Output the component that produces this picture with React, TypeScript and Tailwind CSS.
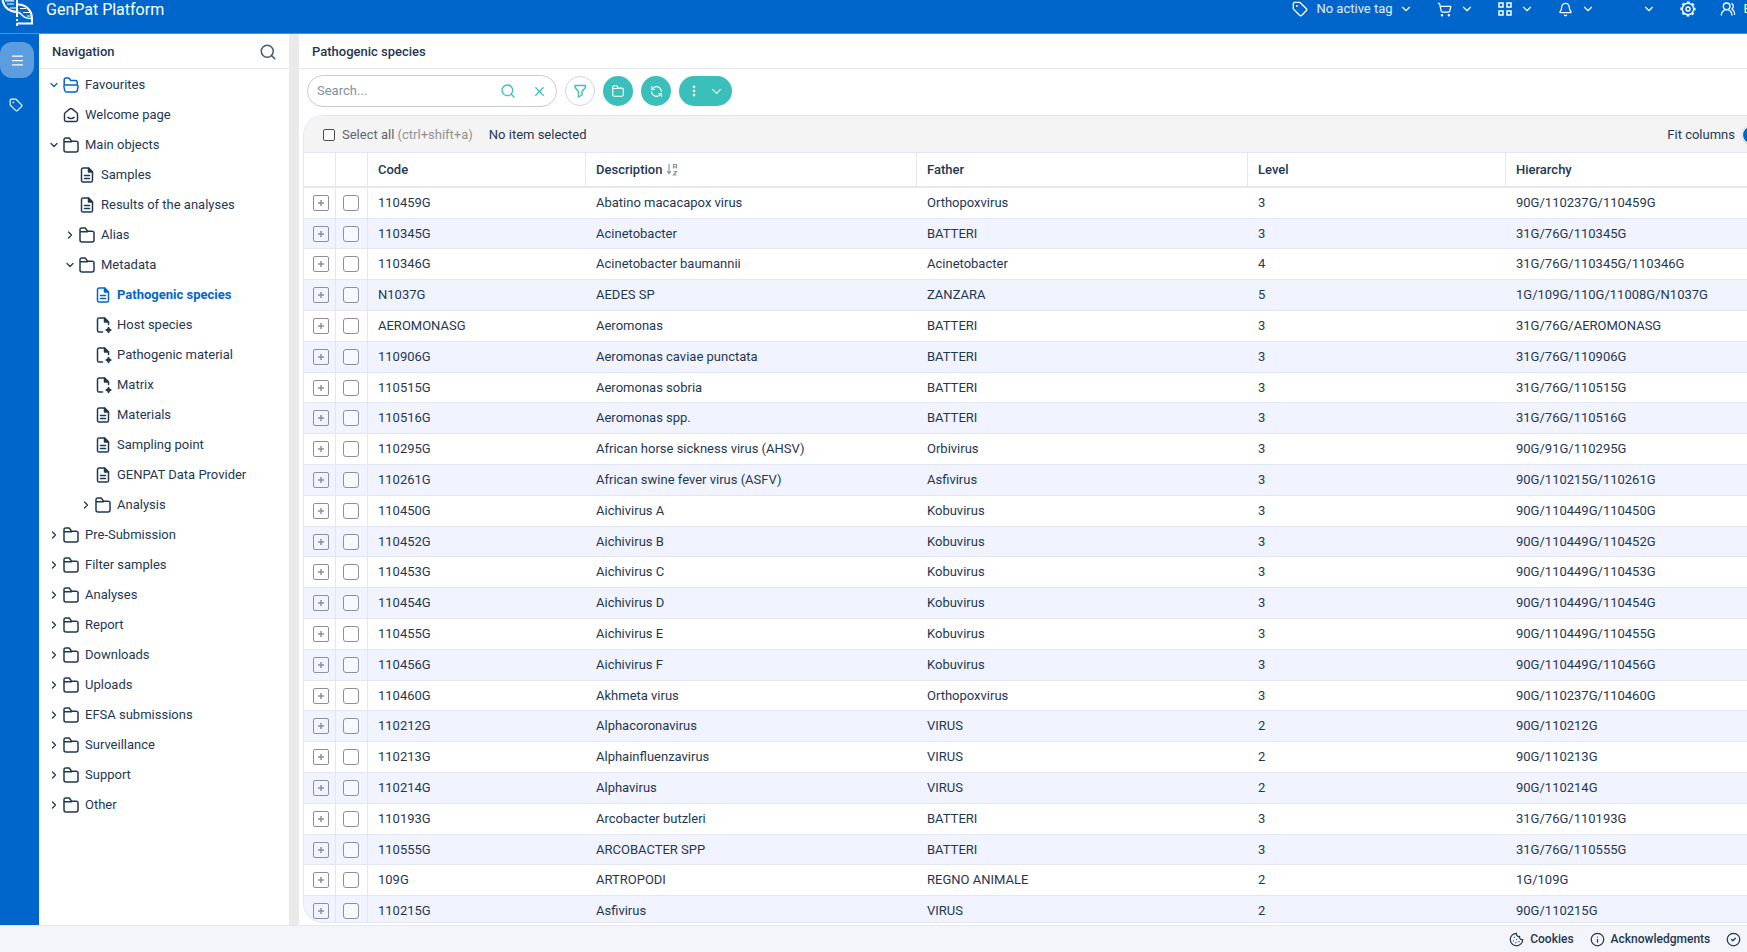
import type { ReactNode } from "react";
import { Bell, ChevronDown, ChevronRight, CircleCheck, Cookie, EllipsisVertical, Info, Menu, RefreshCw, Search, ShoppingCart, Tag, UsersRound, X } from "lucide-react";

type IconName = "folder" | "open" | "file" | "special" | "home";

interface NavItem {
  label: string;
  icon: IconName;
  level: number;
  arrow?: "down" | "right";
  active?: boolean;
}

const navItems: NavItem[] = [
  { label: "Favourites", icon: "open", level: 0, arrow: "down" },
  { label: "Welcome page", icon: "home", level: 0 },
  { label: "Main objects", icon: "folder", level: 0, arrow: "down" },
  { label: "Samples", icon: "file", level: 1 },
  { label: "Results of the analyses", icon: "file", level: 1 },
  { label: "Alias", icon: "folder", level: 1, arrow: "right" },
  { label: "Metadata", icon: "folder", level: 1, arrow: "down" },
  { label: "Pathogenic species", icon: "file", level: 2, active: true },
  { label: "Host species", icon: "special", level: 2 },
  { label: "Pathogenic material", icon: "special", level: 2 },
  { label: "Matrix", icon: "special", level: 2 },
  { label: "Materials", icon: "file", level: 2 },
  { label: "Sampling point", icon: "file", level: 2 },
  { label: "GENPAT Data Provider", icon: "file", level: 2 },
  { label: "Analysis", icon: "folder", level: 2, arrow: "right" },
  { label: "Pre-Submission", icon: "folder", level: 0, arrow: "right" },
  { label: "Filter samples", icon: "folder", level: 0, arrow: "right" },
  { label: "Analyses", icon: "folder", level: 0, arrow: "right" },
  { label: "Report", icon: "folder", level: 0, arrow: "right" },
  { label: "Downloads", icon: "folder", level: 0, arrow: "right" },
  { label: "Uploads", icon: "folder", level: 0, arrow: "right" },
  { label: "EFSA submissions", icon: "folder", level: 0, arrow: "right" },
  { label: "Surveillance", icon: "folder", level: 0, arrow: "right" },
  { label: "Support", icon: "folder", level: 0, arrow: "right" },
  { label: "Other", icon: "folder", level: 0, arrow: "right" },
];

const indent = ["pl-[9px]", "pl-[25px]", "pl-[41px]"];

const rows = [
  ["110459G", "Abatino macacapox virus", "Orthopoxvirus", "3", "90G/110237G/110459G"],
  ["110345G", "Acinetobacter", "BATTERI", "3", "31G/76G/110345G"],
  ["110346G", "Acinetobacter baumannii", "Acinetobacter", "4", "31G/76G/110345G/110346G"],
  ["N1037G", "AEDES SP", "ZANZARA", "5", "1G/109G/110G/11008G/N1037G"],
  ["AEROMONASG", "Aeromonas", "BATTERI", "3", "31G/76G/AEROMONASG"],
  ["110906G", "Aeromonas caviae punctata", "BATTERI", "3", "31G/76G/110906G"],
  ["110515G", "Aeromonas sobria", "BATTERI", "3", "31G/76G/110515G"],
  ["110516G", "Aeromonas spp.", "BATTERI", "3", "31G/76G/110516G"],
  ["110295G", "African horse sickness virus (AHSV)", "Orbivirus", "3", "90G/91G/110295G"],
  ["110261G", "African swine fever virus (ASFV)", "Asfivirus", "3", "90G/110215G/110261G"],
  ["110450G", "Aichivirus A", "Kobuvirus", "3", "90G/110449G/110450G"],
  ["110452G", "Aichivirus B", "Kobuvirus", "3", "90G/110449G/110452G"],
  ["110453G", "Aichivirus C", "Kobuvirus", "3", "90G/110449G/110453G"],
  ["110454G", "Aichivirus D", "Kobuvirus", "3", "90G/110449G/110454G"],
  ["110455G", "Aichivirus E", "Kobuvirus", "3", "90G/110449G/110455G"],
  ["110456G", "Aichivirus F", "Kobuvirus", "3", "90G/110449G/110456G"],
  ["110460G", "Akhmeta virus", "Orthopoxvirus", "3", "90G/110237G/110460G"],
  ["110212G", "Alphacoronavirus", "VIRUS", "2", "90G/110212G"],
  ["110213G", "Alphainfluenzavirus", "VIRUS", "2", "90G/110213G"],
  ["110214G", "Alphavirus", "VIRUS", "2", "90G/110214G"],
  ["110193G", "Arcobacter butzleri", "BATTERI", "3", "31G/76G/110193G"],
  ["110555G", "ARCOBACTER SPP", "BATTERI", "3", "31G/76G/110555G"],
  ["109G", "ARTROPODI", "REGNO ANIMALE", "2", "1G/109G"],
  ["110215G", "Asfivirus", "VIRUS", "2", "90G/110215G"],
];

function Glyph({ name, className = "size-4" }: { name: IconName; className?: string }) {
  const paths: Record<IconName, ReactNode> = {
    folder: (
      <path d="M1 4.7h7.6M1 13V2.6A1.6 1.6 0 0 1 2.6 1h3.6l2.4 3.2h4.6A1.8 1.8 0 0 1 15 6v7a2 2 0 0 1-2 2H3a2 2 0 0 1-2-2Z" />
    ),
    open: (
      <path d="M1.2 8V2.6A1.6 1.6 0 0 1 2.8 1h3l2 2.4h4.8a1.6 1.6 0 0 1 1.6 1.6v3M2 8h12a1.1 1.1 0 0 1 1.1 1.3l-.8 4.2a1.8 1.8 0 0 1-1.8 1.5h-9a1.8 1.8 0 0 1-1.8-1.5L.9 9.3A1.1 1.1 0 0 1 2 8Z" />
    ),
    file: (
      <>
        <path d="M2.5 2.6A1.6 1.6 0 0 1 4.1 1h5.4l4 4v8.4a1.6 1.6 0 0 1-1.6 1.6H4.1a1.6 1.6 0 0 1-1.6-1.6ZM5.5 8.500h5M5.500 11.500h5" />
        <path d="M9.5 1v4h4Z" fill="currentColor" />
      </>
    ),
    special: (
      <>
        <path d="M7.5 15H4.1a1.6 1.6 0 0 1-1.6-1.6V2.6A1.6 1.6 0 0 1 4.1 1h5.4l4 4v2.500" />
        <path d="M9.5 1v4h4Z" fill="currentColor" />
        <path d="m13.500 10.800.7 1.500 1.500.7-1.500.7-.7 1.500-.7-1.500-1.500-.7 1.500-.7Z" strokeWidth="1.800" />
      </>
    ),
    home: <path d="M1.5 7.2c0-.7.3-1.300.9-1.700l4.500-3.600a1.800 1.800 0 0 1 2.200 0l4.500 3.600c.6.400.9 1 .9 1.700v5.600a1.800 1.800 0 0 1-1.800 1.800H3.300a1.800 1.800 0 0 1-1.800-1.800ZM5 10.400c1.600 1.400 4.400 1.400 6 0" />,
  };
  return (
    <svg viewBox="0 0 16 16" className={`shrink-0 overflow-visible ${className}`} fill="none" stroke="currentColor" strokeWidth="1.5" strokeLinecap="round" strokeLinejoin="round" aria-hidden="true">
      {paths[name]}
    </svg>
  );
}

function Logo() {
  return (
    <svg viewBox="0 0 34 27" className="h-[27px] w-[34px]" fill="none" stroke="white" strokeWidth="2" aria-hidden="true">
      <path d="M2.500 0C4 7 9 11.500 17 12M17 0v17M17 19v2M17 23v3" />
      <path d="M18 4.500c8 0 14 6 14 14v5H17" />
      <path d="M17 12c3 0 4 2 6 4s5 2.500 9 2.500" strokeWidth="1.500" />
      <path d="M5 .8h9M7 4h7M10 8h6M20 8.500h6M23 12.500h7M27 16h4" strokeWidth="1.200" />
    </svg>
  );
}

function HeaderMenu({ label, children, className = "" }: { label: string; children?: ReactNode; className?: string }) {
  return (
    <button aria-label={label} className={`flex h-5 shrink-0 items-center ${className}`}>
      {children}
      <ChevronDown size={14} strokeWidth={2} />
    </button>
  );
}

function Header() {
  return (
    <header className="flex h-[34px] shrink-0 items-start overflow-hidden border-b border-[#4a93dc] bg-[#0066cc] text-white">
      <Logo />
      <span className="ml-3 shrink-0 text-base leading-5">GenPat Platform</span>
      <div className="ml-auto -mr-1 flex shrink-0 items-center text-[13px] leading-5 [&>button]:-mt-px">
        <HeaderMenu label="Active tag" className="mr-6">
          <Tag size={16} strokeWidth={2} className="mr-2" />
          <span className="mr-1.5 text-[#e0ecf9]">No active tag</span>
        </HeaderMenu>
        <HeaderMenu label="Cart" className="mr-6">
          <ShoppingCart size={15} strokeWidth={2} className="mr-2" />
        </HeaderMenu>
        <HeaderMenu label="Applications" className="mr-6">
          <svg viewBox="0 0 14 14" className="mr-2 size-[14px]" fill="none" stroke="currentColor" strokeWidth="1.5" aria-hidden="true">
            <path d="M1 1h4v4H1ZM9 1h4v4H9ZM1 9h4v4H1ZM9 9h4v4H9Z" />
          </svg>
        </HeaderMenu>
        <HeaderMenu label="Notifications" className="mr-[47px]">
          <Bell size={15} strokeWidth={2} className="mr-2" />
        </HeaderMenu>
        <HeaderMenu label="Language" className="mr-6" />
        <button aria-label="Settings" className="mr-6">
          <svg viewBox="0 0 16 16" className="size-4" fill="none" stroke="currentColor" aria-hidden="true">
            <circle cx="8" cy="8" r="6.900" strokeWidth="1.400" strokeDasharray="2.800 2.620" strokeDashoffset="1.400" />
            <circle cx="8" cy="8" r="5.700" strokeWidth="1.400" />
            <circle cx="8" cy="8" r="2" strokeWidth="1.400" />
          </svg>
        </button>
        <button className="flex items-center gap-2">
          <UsersRound size={16} strokeWidth={2} />
          <span>E</span>
        </button>
      </div>
    </header>
  );
}

function Sidebar() {
  return (
    <nav className="flex w-[250px] shrink-0 flex-col">
      <div className="flex h-[35px] shrink-0 items-center justify-between border-b border-[#e4e6f0] pt-0.5 pr-3 pl-[13px]">
        <h2 className="text-[13px] font-medium">Navigation</h2>
        <button aria-label="Search navigation">
          <Search size={18} strokeWidth={2} className="text-[#455b71]" />
        </button>
      </div>
      <ul className="pt-px">
        {navItems.map((item) => (
          <li key={item.label}>
            <a href="#" className={`flex h-[30px] items-center text-[13px] ${indent[item.level]} ${item.active ? "font-bold text-[#0066cc]" : ""}`}>
              <span className={`flex w-[15px] shrink-0 ${item.icon === "open" ? "text-[#0066cc]" : ""}`}>
                {item.arrow === "down" && <ChevronDown size={12} strokeWidth={2.5} />}
                {item.arrow === "right" && <ChevronRight size={12} strokeWidth={2.5} />}
              </span>
              <Glyph name={item.icon} className={item.icon === "open" ? "mr-[6px] size-4 text-[#0066cc]" : "mr-[6px] size-4"} />
              {item.label}
            </a>
          </li>
        ))}
      </ul>
    </nav>
  );
}

function Toolbar() {
  return (
    <div className="flex h-[46px] shrink-0 items-center gap-2 px-2 pb-0.5">
      <div className="flex h-8 w-[250px] items-center rounded-full border border-[#c8cad8] px-[9px] text-[#3bbfba]">
        <input aria-label="Search" placeholder="Search..." className="min-w-0 flex-1 text-[13px] text-[#1f3851] outline-none placeholder:text-[#85919e]" />
        <button aria-label="Run search" className="mr-4">
          <Search size={16} strokeWidth={2} />
        </button>
        <button aria-label="Clear search">
          <X size={15} strokeWidth={2} />
        </button>
      </div>
      <button aria-label="Filter" className="flex size-[30px] items-center justify-center rounded-full border border-[#d3d5e2] text-[#3bbfba]">
        <svg viewBox="0 0 14 14" className="size-[14px]" fill="none" stroke="currentColor" strokeWidth="1.4" strokeLinejoin="round" aria-hidden="true">
          <path d="M2 1.5h10.500v2L9 7.500V11l-3.500 2V7.500L2 3.500Z" />
        </svg>
      </button>
      <button aria-label="Open folder" className="flex size-[30px] items-center justify-center rounded-full bg-[#3bbfba] text-white">
        <Glyph name="folder" className="size-3" />
      </button>
      <button aria-label="Refresh" className="flex size-[30px] items-center justify-center rounded-full bg-[#3bbfba] text-white">
        <RefreshCw size={13} strokeWidth={2} className="-scale-x-100" />
      </button>
      <button aria-label="More actions" className="flex h-[30px] items-center gap-2 rounded-full bg-[#3bbfba] px-2 text-white">
        <EllipsisVertical size={14} strokeWidth={2.5} />
        <ChevronDown size={15} strokeWidth={2} />
      </button>
    </div>
  );
}

function SpeciesTable() {
  return (
    <table className="w-full table-fixed border-separate border-spacing-0 text-left text-[13px]">
      <colgroup>
        <col className="w-8" />
        <col className="w-8" />
        <col className="w-[218px]" />
        <col className="w-[331px]" />
        <col className="w-[331px]" />
        <col className="w-[258px]" />
        <col />
      </colgroup>
      <thead>
        <tr className="h-[35px] [&>*]:border-b-2 [&>*]:border-[#e4e7f3] [&>*]:font-medium [&>*:not(:last-child)]:border-r">
          <td />
          <td />
          <th className="px-[10px]">Code</th>
          <th className="px-[10px]">
            <button className="flex items-center gap-1">
              Description
              <svg viewBox="0 0 12 13" className="h-[13px] w-3 text-[#8f96a1]" fill="none" stroke="currentColor" strokeWidth="1.2" aria-hidden="true">
                <path d="M3 1v9M1 8l2 2.500L5 8M7.500 5.500V1.500h3v4M7.500 3.800h3M7.500 8.500h3l-3 3.500h3" />
              </svg>
            </button>
          </th>
          <th className="px-[10px]">Father</th>
          <th className="px-[10px]">Level</th>
          <th className="px-[10px]">Hierarchy</th>
        </tr>
      </thead>
      <tbody>
        {rows.map(([code, description, father, level, hierarchy]) => (
          <tr key={code} className="h-[31px] even:bg-[#f1f3ff] nth-[5n+2]:h-[30px] [&>td]:border-b [&>td]:border-[#e4e7f3]">
            <td className="border-r pl-[9px]">
              <button aria-label={`Expand ${code}`} className="flex size-4 items-center justify-center rounded-[2px] border border-[#8e8f98] text-[#8e8f98]">
                <svg viewBox="0 0 8 8" className="size-2" stroke="currentColor" strokeWidth="1.5" aria-hidden="true">
                  <path d="M1 4h6M4 1v6" />
                </svg>
              </button>
            </td>
            <td className="border-r pl-[7px]">
              <input type="checkbox" aria-label={`Select ${code}`} className="block size-4 appearance-none rounded-[3px] border border-[#8e8f98] bg-white/50" />
            </td>
            <td className="px-[10px]">{code}</td>
            <td className="px-[10px]">{description}</td>
            <td className="px-[10px]">{father}</td>
            <td className="px-[10px]">{level}</td>
            <td className="px-[10px] whitespace-nowrap">{hierarchy}</td>
          </tr>
        ))}
      </tbody>
    </table>
  );
}

export default function App() {
  return (
    <div className="flex h-screen flex-col overflow-hidden bg-white font-['Roboto',sans-serif] text-[#1f3851]">
      <Header />
      <div className="flex min-h-0 flex-1">
        <aside className="flex w-[39px] shrink-0 flex-col items-start bg-[#0066cc] pt-2 text-white">
          <button aria-label="Toggle navigation" className="flex h-9 w-[34px] items-center justify-center rounded-xl bg-[#5c9ddf]">
            <Menu size={15} strokeWidth={2} />
          </button>
          <button aria-label="Tags" className="mt-5 ml-[9px]">
            <Tag size={14} strokeWidth={2} />
          </button>
        </aside>
        <Sidebar />
        <div className="w-[10px] shrink-0 bg-[#eaeaea]" />
        <main className="flex min-w-0 flex-1 flex-col">
          <div className="flex h-[35px] shrink-0 items-center border-b border-[#e4e6f0] pt-0.5 pl-[13px]">
            <h1 className="text-[13px] font-medium">Pathogenic species</h1>
          </div>
          <Toolbar />
          <section className="mb-0.5 ml-1 min-h-0 flex-1 overflow-hidden rounded-l-[20px] border-y border-l border-[#e4e7f3]">
            <div className="flex h-[37px] items-center border-b border-[#e4e7f3] bg-[#f4f4f4] pt-0.5 pl-[19px] text-[13px]">
              <label className="flex items-center gap-[7px] text-[#5c6670]">
                <input type="checkbox" className="size-3 appearance-none rounded-[2px] border border-[#4d4d4d] bg-white" />
                <span>Select all <span className="text-[#929292]">(ctrl+shift+a)</span></span>
              </label>
              <span className="ml-4">No item selected</span>
              <label className="-mr-7 ml-auto flex items-center gap-[6px]">
                Fit columns
                <input type="checkbox" role="switch" className="h-5 w-[34px] appearance-none rounded-full border border-[#d3d5dc] bg-white before:m-px before:block before:size-4 before:rounded-full before:bg-[#0066cc]" />
              </label>
            </div>
            <SpeciesTable />
          </section>
        </main>
      </div>
      <footer className="flex h-[27px] shrink-0 items-center overflow-hidden border-t border-[#e4e6f0] bg-[#f4f5fa] text-xs font-medium">
        <div className="-mr-2 ml-auto flex shrink-0 gap-4">
          <a href="#" className="flex items-center gap-[6px]"><Cookie size={15} />Cookies</a>
          <a href="#" className="flex items-center gap-[6px]"><Info size={15} />Acknowledgments</a>
          <a href="#" className="flex items-center gap-[6px]"><CircleCheck size={15} />V</a>
        </div>
      </footer>
    </div>
  );
}
